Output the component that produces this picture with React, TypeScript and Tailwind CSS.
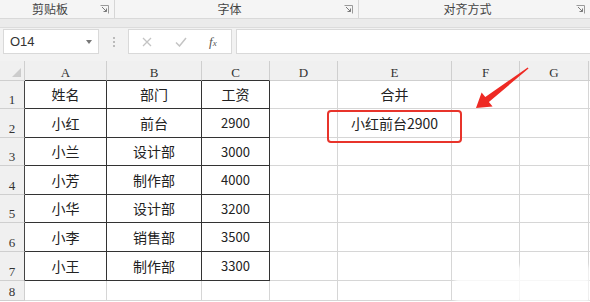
import React from "react";

const cjk = "font-['Noto_Sans_CJK_SC','Noto_Sans',sans-serif]";

const cols = ["A", "B", "C", "D", "E", "F", "G"];
const rowHeights = ["h-[28px]", "h-[29px]", "h-[28px]", "h-[29px]", "h-[28px]", "h-[29px]", "h-[29px]", "h-[20px]"];

const data: string[][] = [
    ["姓名", "部门", "工资", "", "合并", "", ""],
    ["小红", "前台", "2900", "", "小红前台2900", "", ""],
    ["小兰", "设计部", "3000", "", "", "", ""],
    ["小芳", "制作部", "4000", "", "", "", ""],
    ["小华", "设计部", "3200", "", "", "", ""],
    ["小李", "销售部", "3500", "", "", "", ""],
    ["小王", "制作部", "3300", "", "", "", ""],
    ["", "", "", "", "", "", ""],
];

function Launcher() {
    return (
        <svg width="9" height="9" viewBox="0 0 9 9" className="shrink-0">
            <path d="M0.5 0.5 H8.5 V8.5" fill="none" stroke="#9a9a9a" strokeWidth="1" />
            <path d="M2 2 L6.5 6.5 M6.5 3.5 V6.5 H3.5" fill="none" stroke="#7a7a7a" strokeWidth="1" />
        </svg>
    );
}

function RibbonGroup({ label, width, last }: { label: string; width: string; last?: boolean }) {
    return (
        <div className={`${width} flex items-center h-full pr-[5px] ${last ? "" : "border-r border-[#d6d6d6]"}`}>
            <div className="flex-1 text-center text-[12px] text-[#444] leading-none">{label}</div>
            <Launcher />
        </div>
    );
}

export default function App() {
    return (
        <div className={`relative w-[590px] h-[302px] overflow-hidden bg-white ${cjk}`}>
            {/* Ribbon group labels */}
            <div className="flex h-[19px] bg-[#f5f5f5] border-b border-[#d9d9d9]">
                <RibbonGroup label="剪贴板" width="w-[115px]" />
                <RibbonGroup label="字体" width="w-[244px]" />
                <RibbonGroup label="对齐方式" width="flex-1" last />
            </div>
            <div className="h-[9px] bg-[#ebebeb] border-b border-[#dcdcdc]" />

            {/* Formula bar */}
            <div className="flex items-start h-[33px] bg-[#f2f2f2] pt-[1px] pl-[3px]">
                <div className="w-[96px] h-[25px] bg-white border border-[#d9d9d9] flex items-center justify-between pl-[6px] pr-[6px]">
                    <span className="text-[13px] text-[#333] font-['Liberation_Sans',sans-serif]">O14</span>
                    <span className="w-0 h-0 border-l-[3px] border-r-[3px] border-t-[4px] border-l-transparent border-r-transparent border-t-[#777]" />
                </div>
                <div className="w-[29px] h-[25px] flex flex-col items-center justify-center gap-[2px]">
                    <span className="w-[2px] h-[2px] bg-[#bbb]" />
                    <span className="w-[2px] h-[2px] bg-[#bbb]" />
                    <span className="w-[2px] h-[2px] bg-[#bbb]" />
                </div>
                <div className="w-[104px] h-[25px] bg-white border border-[#d9d9d9] flex items-center pl-[10px] pr-[8px]">
                    <svg width="10" height="10" viewBox="0 0 10 10" className="ml-[3px]">
                        <path d="M1 1 L9 9 M9 1 L1 9" stroke="#c4c4c4" strokeWidth="1.3" />
                    </svg>
                    <svg width="12" height="10" viewBox="0 0 12 10" className="ml-[23px]">
                        <path d="M1 5.5 L4.5 9 L11 1" fill="none" stroke="#c4c4c4" strokeWidth="1.5" />
                    </svg>
                    <span className="ml-[22px] text-[13px] italic text-[#555] font-['Liberation_Serif',serif] leading-none">
                        f<span className="text-[9px]">x</span>
                    </span>
                </div>
                <div className="ml-[4px] flex-1 h-[25px] bg-white border border-[#d9d9d9] border-r-0" />
            </div>

            {/* Sheet grid */}
            <div className="grid grid-cols-[25px_82px_95px_68px_68px_114px_68px_69px_1fr] bg-white">
                {/* header row */}
                <div className="h-[20px] bg-[#f0f0f0] border-r border-b border-[#cfcfcf] relative">
                    <svg width="9" height="9" viewBox="0 0 9 9" className="absolute right-[3px] bottom-[3px]">
                        <path d="M9 0 L9 9 L0 9 Z" fill="#cccccc" />
                    </svg>
                </div>
                {cols.map((c, i) => (
                    <div
                        key={c}
                        className={`h-[20px] bg-[#f0f0f0] border-r border-[#cfcfcf] border-b flex items-end justify-center pb-[1px] text-[13px] leading-none text-[#333] font-['Liberation_Serif',serif] ${i < 3 ? "border-b-[#333]" : "border-b-[#cfcfcf]"}`}
                    >
                        {c}
                    </div>
                ))}
                <div className="h-[20px] bg-[#f0f0f0] border-b border-[#cfcfcf]" />

                {data.map((row, r) => (
                    <React.Fragment key={r}>
                        <div
                            className={`${rowHeights[r]} bg-[#f0f0f0] border-b border-[#cfcfcf] border-r flex items-end justify-center pb-[2px] text-[13px] leading-none text-[#333] font-['Liberation_Serif',serif] ${r < 7 ? "border-r-[#444]" : "border-r-[#cfcfcf]"}`}
                        >
                            {r + 1}
                        </div>
                        {row.map((v, c) => {
                            const inTable = r < 7 && c < 3;
                            const numeric = /^\d+$/.test(v);
                            return (
                                <div
                                    key={c}
                                    className={`${rowHeights[r]} border-r border-b flex items-center justify-center text-[#222] ${numeric ? "text-[13px]" : "text-[14px]"} ${inTable ? "border-r-[#333] border-b-[#333]" : "border-r-[#d6d6d6] border-b-[#d6d6d6]"}`}
                                >
                                    {v}
                                </div>
                            );
                        })}
                        <div className={`${rowHeights[r]} border-b border-[#d6d6d6]`} />
                    </React.Fragment>
                ))}
            </div>

            {/* highlight box on E2 */}
            <div className="absolute left-[327px] top-[110px] w-[135px] h-[33px] border-2 border-[#e8342b] rounded-[4px]" />

            {/* arrow */}
            <svg className="absolute left-0 top-0 pointer-events-none" width="590" height="302">
                <polygon
                    points="527.7,67.4 485.3,97.1 481.6,92.4 476,108 492.6,106.6 488.9,101.9 528.5,68.6"
                    fill="#ee2a24"
                />
            </svg>

            {/* faint watermark smudge */}
            <div className="absolute left-[455px] top-[266px] w-[135px] h-[36px] bg-white/80 blur-[2px]" />
        </div>
    );
}
